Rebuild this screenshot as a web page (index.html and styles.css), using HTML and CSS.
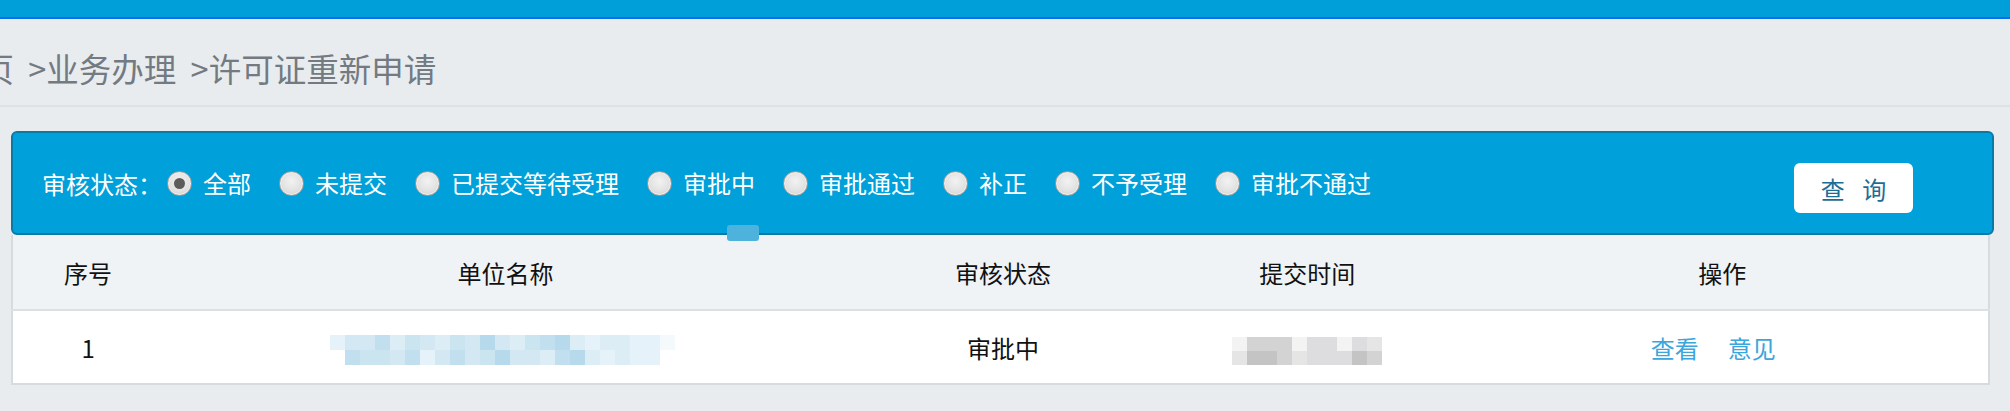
FILE: index.html
```html
<!DOCTYPE html>
<html lang="zh-CN">
<head>
<meta charset="utf-8">
<title>许可证重新申请</title>
<link rel="stylesheet" href="styles.css">
</head>
<body>
<div class="topbar"></div>
<div class="crumbs"><span class="crumbs-text">首页 &gt;业务办理 &gt;许可证重新申请</span></div>
<div class="content">
  <div class="filter">
    <span class="filter-label">审核状态：</span>
    <label class="opt"><span class="radio checked"></span><span class="opt-text">全部</span></label>
    <label class="opt"><span class="radio"></span><span class="opt-text">未提交</span></label>
    <label class="opt"><span class="radio"></span><span class="opt-text">已提交等待受理</span></label>
    <label class="opt"><span class="radio"></span><span class="opt-text">审批中</span></label>
    <label class="opt"><span class="radio"></span><span class="opt-text">审批通过</span></label>
    <label class="opt"><span class="radio"></span><span class="opt-text">补正</span></label>
    <label class="opt"><span class="radio"></span><span class="opt-text">不予受理</span></label>
    <label class="opt"><span class="radio"></span><span class="opt-text">审批不通过</span></label>
    <button class="query">查 询</button>
    <span class="tab-nub"></span>
  </div>
  <table class="grid">
    <colgroup>
      <col class="c-no"><col class="c-name"><col class="c-status"><col class="c-time"><col class="c-op">
    </colgroup>
    <thead>
      <tr><th>序号</th><th>单位名称</th><th>审核状态</th><th>提交时间</th><th>操作</th></tr>
    </thead>
    <tbody>
      <tr>
        <td>1</td>
        <td>
          <div class="blur blue">
            <div class="blur-row">
              <i class="b0"></i><i class="b2"></i><i class="b2"></i><i class="b4"></i><i class="b1"></i><i class="b3"></i><i class="b2"></i><i class="b1"></i><i class="b3"></i><i class="b2"></i><i class="b5"></i><i class="b2"></i><i class="b1"></i><i class="b3"></i><i class="b4"></i><i class="b5"></i><i class="b1"></i><i class="b0"></i><i class="b1"></i><i class="b1"></i><i class="b0"></i><i class="b0"></i><i class="bw"></i>
            </div>
            <div class="blur-row shift">
              <i class="b4"></i><i class="b3"></i><i class="b3"></i><i class="b2"></i><i class="b4"></i><i class="b0"></i><i class="b2"></i><i class="b4"></i><i class="b2"></i><i class="b3"></i><i class="b5"></i><i class="b2"></i><i class="b2"></i><i class="b1"></i><i class="b4"></i><i class="b5"></i><i class="b1"></i><i class="b0"></i><i class="b1"></i><i class="b0"></i><i class="b0"></i>
            </div>
          </div>
        </td>
        <td>审批中</td>
        <td>
          <div class="blur gray">
            <div class="blur-row">
              <i class="g0"></i><i class="g3"></i><i class="g3"></i><i class="g3"></i><i class="g0"></i><i class="g2"></i><i class="g2"></i><i class="g0"></i><i class="g2"></i><i class="g1"></i>
            </div>
            <div class="blur-row">
              <i class="g1"></i><i class="g4"></i><i class="g4"></i><i class="g3"></i><i class="g1"></i><i class="g2"></i><i class="g2"></i><i class="g2"></i><i class="g4"></i><i class="g3"></i>
            </div>
          </div>
        </td>
        <td><div class="ops"><a class="op-link" href="#">查看</a><a class="op-link" href="#">意见</a></div></td>
      </tr>
    </tbody>
  </table>
</div>
</body>
</html>
```
FILE: styles.css
```css
* { box-sizing: border-box; }
html, body { margin: 0; padding: 0; }
body {
  background: #e8ecef;
  font-family: "Noto Sans CJK SC", "Liberation Sans", sans-serif;
  width: 2010px;
  overflow: hidden;
}
.topbar {
  height: 19px;
  background: #009fd9;
  border-bottom: 2px solid #0b6cf6;
}
.crumbs {
  height: 88px;
  padding-top: 30px;
  border-bottom: 2px solid #dde2e6;
  overflow: hidden;
}
.crumbs-text {
  display: block;
  margin-left: -51px;
  font-size: 32.5px;
  line-height: 38px;
  word-spacing: 7px;
  color: #737a81;
  white-space: nowrap;
}
.content {
  padding: 24px 0 0 11px;
  width: 1994px;
}
.filter {
  position: relative;
  z-index: 2;
  height: 104px;
  background: #00a0da;
  border: 2px solid #0a79a6;
  border-radius: 6px;
  display: flex;
  align-items: center;
  padding: 0 79px 0 29px;
  color: #fff;
  font-size: 24px;
}
.filter-label { margin-right: 5px; white-space: nowrap; }
.opt {
  display: flex;
  align-items: center;
  margin-right: 28px;
  white-space: nowrap;
}
.radio {
  width: 25px;
  height: 25px;
  border-radius: 50%;
  margin-right: 11px;
  background: radial-gradient(circle at 50% 40%, #f2f2f2 0%, #e2e2e2 55%, #c9c9c9 100%);
  border: 1px solid #9c9c9c;
  box-shadow: inset 0 0 0 1px #efefef;
  display: flex;
  align-items: center;
  justify-content: center;
}
.radio.checked::after {
  content: "";
  width: 11px;
  height: 11px;
  border-radius: 50%;
  background: #5c5c5c;
}
.opt-text { line-height: 30px; }
.query {
  margin-left: auto;
  margin-top: 10px;
  width: 119px;
  height: 50px;
  background: #fff;
  border: 0;
  border-radius: 6px;
  font-family: inherit;
  font-size: 24px;
  color: #1c6d96;
  word-spacing: 12px;
  padding: 0;
}
.tab-nub {
  position: absolute;
  left: 714px;
  top: 92px;
  width: 32px;
  height: 16px;
  background: #4db3dc;
  border-radius: 3px;
}
.grid {
  width: 1979px;
  table-layout: fixed;
  border-collapse: collapse;
  font-size: 24px;
  color: #111;
  border-left: 2px solid #d6dbe0;
  border-right: 2px solid #d6dbe0;
}
.c-no { width: 151px; }
.c-name { width: 684px; }
.c-status { width: 310px; }
.c-time { width: 298px; }
.c-op { width: 532px; }
.grid th {
  height: 75px;
  padding: 0;
  background: #eff3f6;
  font-weight: normal;
  text-align: center;
  border-bottom: 2px solid #dcdfe3;
}
.grid td {
  height: 74px;
  padding: 0;
  background: #fff;
  text-align: center;
  border-bottom: 2px solid #d6dbe0;
}
.blur {
  display: inline-flex;
  flex-direction: column;
  vertical-align: middle;
}
.blur.blue { margin-left: -6px; }
.blur-row { display: flex; }
.blur-row i { display: block; width: 15px; height: 15px; }
.blur.gray .blur-row i { height: 14px; }
.blur-row.shift { margin-left: 15px; }
.b0 { background: #e6f2f9; }
.b1 { background: #dcedf6; }
.b2 { background: #d3e8f3; }
.b3 { background: #cae4f0; }
.b4 { background: #c1dfee; }
.b5 { background: #b6d9eb; }
.bw { background: #f4f9fc; }
.g0 { background: #f3f3f3; }
.g1 { background: #e6e5e5; }
.g2 { background: #dddde0; }
.g3 { background: #d4d3d3; }
.g4 { background: #c4c4c4; }
.ops {
  display: flex;
  justify-content: center;
  gap: 29px;
  padding-right: 18px;
}
.op-link {
  color: #3ba6dc;
  text-decoration: none;
}
```
